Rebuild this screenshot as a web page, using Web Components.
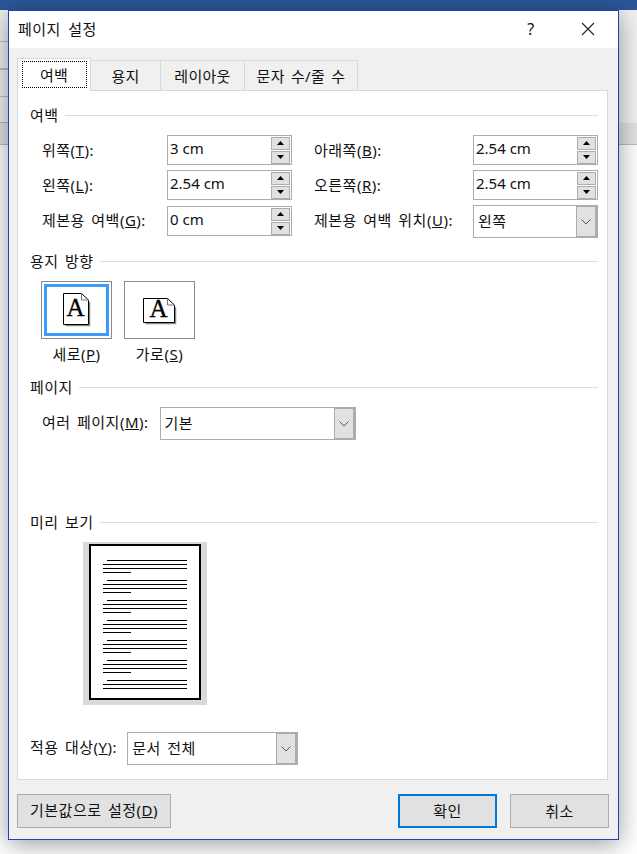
<!DOCTYPE html>
<html lang="ko">
<head>
<meta charset="utf-8">
<title>페이지 설정</title>
<style>
  html, body { margin: 0; height: 100%; }
  body {
    overflow: hidden;
    font: 15px "Noto Sans", "Noto Sans CJK KR", sans-serif;
    letter-spacing: .5px;
    word-spacing: 2px;
    color: #111;
  }
</style>
</head>
<body>
<word-backdrop></word-backdrop>
<page-dialog heading="페이지 설정">
  <tab-strip>
    <tab-item active>여백</tab-item>
    <tab-item style="width:70px">용지</tab-item>
    <tab-item style="width:84px">레이아웃</tab-item>
    <tab-item style="width:113px">문자 수/줄 수</tab-item>
  </tab-strip>
  <tab-panel>
    <form-group heading="여백" style="margin-top:14px">
      <margin-grid>
        <field-label>위쪽(<u>T</u>):</field-label>
        <spin-field>3 cm</spin-field>
        <field-label>아래쪽(<u>B</u>):</field-label>
        <spin-field>2.54 cm</spin-field>
        <field-label>왼쪽(<u>L</u>):</field-label>
        <spin-field>2.54 cm</spin-field>
        <field-label>오른쪽(<u>R</u>):</field-label>
        <spin-field>2.54 cm</spin-field>
        <field-label>제본용 여백(<u>G</u>):</field-label>
        <spin-field style="margin-top:1px">0 cm</spin-field>
        <field-label>제본용 여백 위치(<u>U</u>):</field-label>
        <combo-box style="width:125px">왼쪽</combo-box>
      </margin-grid>
    </form-group>
    <form-group heading="용지 방향" style="margin-top:13px">
      <orient-row>
        <orient-button selected shape="portrait">세로(<u>P</u>)</orient-button>
        <orient-button shape="landscape">가로(<u>S</u>)</orient-button>
      </orient-row>
    </form-group>
    <form-group heading="페이지" style="margin-top:13px">
      <form-row style="padding-left:12px;gap:11px">
        <field-label>여러 페이지(<u>M</u>):</field-label>
        <combo-box style="width:196px">기본</combo-box>
      </form-row>
    </form-group>
    <form-group heading="미리 보기" style="margin-top:72px">
      <page-preview></page-preview>
    </form-group>
    <form-row style="margin-top:27px;gap:10px">
      <field-label>적용 대상(<u>Y</u>):</field-label>
      <combo-box style="width:171px">문서 전체</combo-box>
    </form-row>
  </tab-panel>
  <dialog-footer>
    <win-button style="width:154px;padding-bottom:3px">기본값으로 설정(<u>D</u>)</win-button>
    <win-button primary style="width:99px;margin-left:auto">확인</win-button>
    <win-button style="width:99px;margin-left:13px">취소</win-button>
  </dialog-footer>
</page-dialog>

<script>
// small helper, every element below is just a style block plus markup
function shadow(el, html) {
  el.attachShadow({ mode: 'open' }).innerHTML = html
}

class WordBackdrop extends HTMLElement {
  constructor() {
    super()
    shadow(this, `
      <style>
        :host { display: flex; flex-direction: column; height: 854px; background: #fff; }
        .title { height: 10px; background: #2b579a; }
        .ribbon { height: 113px; background: #f1f1f1; }
        .rail { width: 8px; height: 100%; display: flex; flex-direction: column; }
        .rail div { background: #f0f0f0; border-bottom: 1px solid #bdbdbd; }
        .band { height: 21px; background: #e2e2e2; border-bottom: 1px solid #bdbdbd; }
      </style>
      <div class="title"></div>
      <div class="ribbon">
        <div class="rail">
          <div style="height:31px"></div>
          <div style="height:27px;border-bottom-width:2px"></div>
          <div style="height:26px"></div>
          <div style="height:25px"></div>
        </div>
      </div>
      <div class="band"></div>
    `)
  }
}

class PageDialog extends HTMLElement {
  constructor() {
    super()
    shadow(this, `
      <style>
        :host {
          position: absolute; left: 8px; top: 10px;
          width: 609px; height: 828px;
          display: flex; flex-direction: column;
          background: #f0f0f0;
          border: 1px solid #1b45b4;
          box-shadow: 0 4px 24px rgba(0,0,0,.4);
        }
        header {
          box-sizing: border-box; height: 37px; flex: none; background: #fff;
          display: flex; align-items: center;
          padding: 0 0 2px 9px;
          word-spacing: 3px;
        }
        .name { flex: 1; }
        .help { width: 10px; margin-right: 45px; font-size: 16px; text-align: center; }
        svg { margin-right: 23px; }
        main { flex: 1; display: flex; flex-direction: column; padding: 10px 10px 0 8px; }
      </style>
      <header>
        <span class="name"></span>
        <span class="help">?</span>
        <svg width="14" height="14" viewBox="0 0 14 14" fill="none" stroke="#222" stroke-width="1.1"><path d="M1 1l12 12M13 1L1 13"/></svg>
      </header>
      <main><slot></slot></main>
    `)
    this.shadowRoot.querySelector('.name').textContent = this.getAttribute('heading')
  }
}

class TabStrip extends HTMLElement {
  constructor() {
    super()
    shadow(this, `
      <style>
        :host { display: flex; align-items: flex-end; height: 33px; flex: none; margin-bottom: -1px; position: relative; z-index: 1; }
      </style>
      <slot></slot>
    `)
  }
}

class TabItem extends HTMLElement {
  constructor() {
    super()
    shadow(this, `
      <style>
        :host {
          display: flex; box-sizing: border-box;
          height: 31px; align-items: center; justify-content: center;
          border: 1px solid #d9d9d9; border-bottom-color: #d9d9d9; border-left-width: 0;
          background: #f0f0f0; letter-spacing: .3px;
        }
        :host([active]) {
          width: 74px; height: 33px; background: #fff;
          border-left-width: 1px; border-bottom: 0;
          padding-bottom: 2px;
        }
        .focus { display: flex; align-items: center; justify-content: center; }
        :host([active]) .focus { width: 65px; height: 27px; box-sizing: border-box; outline: 1px dotted #000; outline-offset: -1px; }
      </style>
      <div class="focus"><slot></slot></div>
    `)
  }
}

class TabPanel extends HTMLElement {
  constructor() {
    super()
    shadow(this, `
      <style>
        :host {
          display: block; box-sizing: border-box; height: 690px; flex: none;
          background: #fff; border: 1px solid #d9d9d9;
          padding: 0 9px 0 12px;
        }
      </style>
      <slot></slot>
    `)
  }
}

class FormGroup extends HTMLElement {
  constructor() {
    super()
    shadow(this, `
      <style>
        :host { display: block; }
        .head { display: flex; align-items: center; gap: 6px; height: 20px; margin-bottom: 10px; }
        .text { padding-bottom: 2px; }
        .rule { flex: 1; height: 1px; background: #dcdcdc; }
      </style>
      <div class="head"><span class="text"></span><span class="rule"></span></div>
      <slot></slot>
    `)
    this.shadowRoot.querySelector('.text').textContent = this.getAttribute('heading')
  }
}

class MarginGrid extends HTMLElement {
  constructor() {
    super()
    shadow(this, `
      <style>
        :host {
          display: grid; padding-left: 12px;
          grid-template-columns: 125px 147px 159px 125px;
          grid-template-rows: 30px 30px 33px;
          row-gap: 5px; align-items: start;
        }
      </style>
      <slot></slot>
    `)
  }
}

class FormRow extends HTMLElement {
  constructor() {
    super()
    shadow(this, `
      <style>:host { display: flex; align-items: flex-start; }</style>
      <slot></slot>
    `)
  }
}

class FieldLabel extends HTMLElement {
  constructor() {
    super()
    shadow(this, `
      <style>:host { display: block; line-height: 31px; white-space: nowrap; }</style>
      <slot></slot>
    `)
  }
}

class SpinField extends HTMLElement {
  constructor() {
    super()
    shadow(this, `
      <style>
        :host {
          display: flex; box-sizing: border-box; width: 125px; height: 30px;
          border: 1px solid #acacac; background: #fff; align-items: center;
          letter-spacing: 0; word-spacing: 0;
        }
        .value { flex: 1; padding: 0 0 5px 2px; }
        .arrows { display: flex; flex-direction: column; gap: 1px; margin-right: 1px; }
        .arrows div {
          box-sizing: border-box; width: 19px; height: 13px;
          background: #e1e1e1; border: 1px solid #acacac;
          display: flex; align-items: center; justify-content: center;
        }
        svg { display: block; }
      </style>
      <div class="value"><slot></slot></div>
      <div class="arrows">
        <div><svg width="7" height="4" viewBox="0 0 7 4"><path d="M3.5 0L7 4H0z"/></svg></div>
        <div><svg width="7" height="4" viewBox="0 0 7 4"><path d="M0 0h7L3.5 4z"/></svg></div>
      </div>
    `)
  }
}

class ComboBox extends HTMLElement {
  constructor() {
    super()
    shadow(this, `
      <style>
        :host {
          display: flex; box-sizing: border-box; height: 33px;
          border: 1px solid #acacac; background: #fff; align-items: center;
        }
        .value { flex: 1; padding: 0 0 3px 4px; }
        .drop {
          box-sizing: border-box; align-self: stretch; width: 21px;
          background: #e1e1e1; border-left: 1px solid #acacac;
          border-right: 2px solid #acacac; border-top: 1px solid #acacac; border-bottom: 1px solid #acacac;
          display: flex; align-items: center; justify-content: center;
        }
      </style>
      <div class="value"><slot></slot></div>
      <div class="drop">
        <svg width="10" height="6" viewBox="0 0 10 6" fill="none" stroke="#555"><path d="M.5.5L5 5 9.500.5"/></svg>
      </div>
    `)
  }
}

class OrientRow extends HTMLElement {
  constructor() {
    super()
    shadow(this, `
      <style>:host { display: flex; gap: 12px; padding-left: 11px; }</style>
      <slot></slot>
    `)
  }
}

class OrientButton extends HTMLElement {
  constructor() {
    super()
    const wide = this.getAttribute('shape') === 'landscape'
    const w = wide ? 32 : 26
    const h = wide ? 25 : 32
    const fold = 7
    // svg gets 4px of air above and below so the letter's line box stays inside it
    shadow(this, `
      <style>
        :host { display: flex; flex-direction: column; align-items: center; width: 71px; }
        .box {
          box-sizing: border-box; width: 71px; height: 58px;
          border: 1px solid #8a8a8a; background: #fff; padding: 2px;
        }
        .ring {
          box-sizing: border-box; height: 100%; border: 3px solid transparent;
          display: flex; align-items: center; justify-content: center;
        }
        :host([selected]) .ring { border-color: #3f9bfb; }
        .caption { margin-top: 5px; line-height: 20px; }
        text { font: 25px "Liberation Serif", serif; stroke: #000; stroke-width: .35; letter-spacing: 0; }
      </style>
      <div class="box"><div class="ring">
        <svg width="${w + 2}" height="${h + 10}" viewBox="0 -4 ${w + 2} ${h + 10}" style="margin:${wide ? '2px 0 0 0' : '0'}">
          <path d="M2.500 ${h + .5}H${w + .5}V${fold + 2}" fill="none" stroke="#8a8a8a" stroke-width="1.5"/>
          <path d="M.5.5H${w - fold - .5}L${w - .5} ${fold}V${h - .5}H.5z" fill="#fff" stroke="#000"/>
          <path d="M${w - fold - .5}.5V${fold}H${w - .5}" fill="none" stroke="#777"/>
          <text x="${(w - 1) / 2}" y="${wide ? 19 : 23}" text-anchor="middle">A</text>
        </svg>
      </div></div>
      <div class="caption"><slot></slot></div>
    `)
  }
}

class PagePreview extends HTMLElement {
  constructor() {
    super()
    let blocks = ''
    for (let i = 0; i < 7; i++) {
      blocks += `<div class="block">
        <i style="margin-left:4px"></i><i></i><i></i>${i < 6 ? '<i style="width:28px"></i>' : ''}
      </div>`
    }
    shadow(this, `
      <style>
        :host {
          display: flex; justify-content: center; box-sizing: border-box;
          width: 124px; height: 163px; margin-left: 53px;
          background: #d9d9d9; padding-top: 2px;
        }
        .sheet {
          box-sizing: border-box; width: 112px; height: 156px;
          background: #fff; border: 2px solid #000;
          padding: 14px 12px 0;
          display: flex; flex-direction: column; gap: 7px;
        }
        .block { display: flex; flex-direction: column; gap: 3px; }
        i { display: block; height: 1px; background: #000; }
      </style>
      <div class="sheet">${blocks}</div>
    `)
  }
}

class DialogFooter extends HTMLElement {
  constructor() {
    super()
    shadow(this, `
      <style>:host { display: flex; margin-top: 14px; margin-right: -1px; }</style>
      <slot></slot>
    `)
  }
}

class WinButton extends HTMLElement {
  constructor() {
    super()
    shadow(this, `
      <style>
        :host {
          display: flex; box-sizing: border-box; height: 34px;
          align-items: center; justify-content: center;
          background: #e1e1e1; border: 1px solid #adadad;
          padding-bottom: 2px; white-space: nowrap;
        }
        :host([primary]) { border: 2px solid #0078d7; }
      </style>
      <slot></slot>
    `)
  }
}

customElements.define('word-backdrop', WordBackdrop)
customElements.define('page-dialog', PageDialog)
customElements.define('tab-strip', TabStrip)
customElements.define('tab-item', TabItem)
customElements.define('tab-panel', TabPanel)
customElements.define('form-group', FormGroup)
customElements.define('margin-grid', MarginGrid)
customElements.define('form-row', FormRow)
customElements.define('field-label', FieldLabel)
customElements.define('spin-field', SpinField)
customElements.define('combo-box', ComboBox)
customElements.define('orient-row', OrientRow)
customElements.define('orient-button', OrientButton)
customElements.define('page-preview', PagePreview)
customElements.define('dialog-footer', DialogFooter)
customElements.define('win-button', WinButton)
</script>
</body>
</html>
